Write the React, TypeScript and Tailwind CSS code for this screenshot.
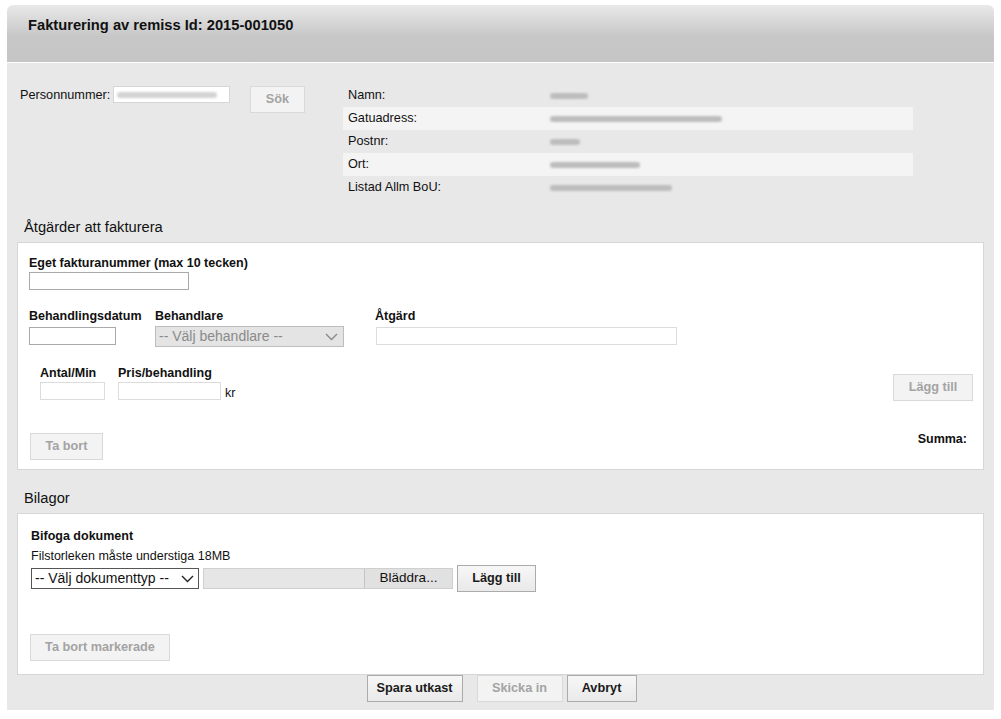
import React from 'react';

const font = { fontFamily: '"Liberation Sans", Arial, sans-serif' };

const Btn: React.FC<{ label: string; disabled?: boolean; className?: string }> = ({ label, disabled, className = '' }) => (
  <div
    className={`flex items-center justify-center border text-[12.7px] font-bold ${
      disabled
        ? 'border-[#d9d9d9] bg-[#f3f3f3] text-[#a3a3a3]'
        : 'border-[#ababab] bg-linear-to-b from-[#f7f7f7] to-[#e9e9e9] text-[#1a1a1a]'
    } ${className}`}
  >
    {label}
  </div>
);

const Chevron: React.FC<{ color: string }> = ({ color }) => (
  <svg width="13" height="8" viewBox="0 0 13 8" fill="none">
    <path d="M1 1l5.5 5.5L12 1" stroke={color} strokeWidth="1.4" />
  </svg>
);

const Blur: React.FC<{ w: number; light?: boolean }> = ({ w, light }) => (
  <div
    className={`h-[6px] rounded-sm blur-[1.2px] ${light ? 'bg-[#d4d4d4]' : 'bg-[#bdbdbd]'}`}
    style={{ width: w }}
  />
);

const info: { label: string; w: number; stripe: boolean }[] = [
  { label: 'Namn:', w: 38, stripe: false },
  { label: 'Gatuadress:', w: 172, stripe: true },
  { label: 'Postnr:', w: 30, stripe: false },
  { label: 'Ort:', w: 90, stripe: true },
  { label: 'Listad Allm BoU:', w: 122, stripe: false },
];

export default function App() {
  return (
    <div className="min-h-[719px] bg-white pt-[5px] pl-[7px]" style={font}>
      <div className="w-[987px]">
        <div className="h-[57px] rounded-t-[6px] bg-linear-to-b from-[#e9e9e9] via-[#c7c7c7] via-55% to-[#c5c5c5] pl-[21px] pt-[9px] text-[14.7px] font-bold text-[#111]">
          Fakturering av remiss Id: 2015-001050
        </div>
        <div className="h-px bg-white" />
        <div className="h-[647px] bg-[#e8e8e8]">
          {/* top section */}
          <div className="flex pt-[21px]">
            <div className="flex w-[336px] items-start pl-[13px]">
              <div className="mt-[2px] w-[93px] text-[12.7px] text-[#111]">Personnummer:</div>
              <div className="mt-[2px] flex h-[17px] w-[117px] items-center border border-[#d6d6d6] bg-white pl-[3px]">
                <Blur w={100} light />
              </div>
              <Btn label="Sök" disabled className="ml-[20px] mt-[2px] h-[27px] w-[55px]" />
            </div>
            <div className="w-[570px]">
              {info.map((r) => (
                <div
                  key={r.label}
                  className={`flex h-[23px] items-center text-[12.7px] text-[#111] ${r.stripe ? 'bg-[#f4f4f4]' : ''}`}
                >
                  <div className="w-[207px] pl-[5px]">{r.label}</div>
                  <Blur w={r.w} />
                </div>
              ))}
            </div>
          </div>

          {/* Åtgärder */}
          <div className="flex h-[43px] items-end pb-[5px] pl-[17px] text-[14.7px] leading-[20px] text-[#111]">
            Åtgärder att fakturera
          </div>
          <div className="mx-[10px] h-[228px] border border-[#d6d6d6] bg-white text-[12.5px] text-[#111]">
            <div className="pl-[11px] pt-[12px]">
              <div className="font-bold leading-[16px]">Eget fakturanummer (max 10 tecken)</div>
              <input className="mt-px block h-[18px] w-[160px] border border-[#a9a9a9] bg-white" />
            </div>
            <div className="mt-[18px] flex pl-[11px]">
              <div className="w-[126px]">
                <div className="font-bold leading-[16px]">Behandlingsdatum</div>
                <input className="mt-[3px] block h-[18px] w-[87px] border border-[#a9a9a9] bg-white" />
              </div>
              <div className="w-[220px]">
                <div className="font-bold leading-[16px]">Behandlare</div>
                <div className="mt-[2px] flex h-[21px] w-[189px] items-center justify-between border border-[#bdbdbd] bg-[#e4e4e4] pl-[3px] pr-[5px] text-[14px] text-[#8a8a8a]">
                  <span>-- Välj behandlare --</span>
                  <Chevron color="#8a8a8a" />
                </div>
              </div>
              <div>
                <div className="font-bold leading-[16px]">Åtgärd</div>
                <input className="ml-px mt-[3px] block h-[18px] w-[301px] border border-[#dcdcdc] bg-white" />
              </div>
            </div>
            <div className="mt-[18px] flex items-start pl-[22px] pr-[10px]">
              <div className="w-[78px]">
                <div className="font-bold leading-[16px]">Antal/Min</div>
                <input className="mt-[1px] block h-[18px] w-[65px] border border-[#dcdcdc] bg-white" />
              </div>
              <div>
                <div className="font-bold leading-[16px]">Pris/behandling</div>
                <div className="mt-[1px] flex items-end">
                  <input className="block h-[18px] w-[103px] border border-[#dcdcdc] bg-white" />
                  <span className="ml-[4px] leading-[14px]">kr</span>
                </div>
              </div>
              <Btn label="Lägg till" disabled className="ml-auto mt-[9px] h-[27px] w-[80px]" />
            </div>
            <div className="mt-[32px] flex items-start pl-[12px] pr-[16px]">
              <Btn label="Ta bort" disabled className="h-[27px] w-[73px]" />
              <div className="ml-auto mt-[-3px] font-bold">Summa:</div>
            </div>
          </div>

          {/* Bilagor */}
          <div className="flex h-[43px] items-end pb-[5px] pl-[17px] text-[14.7px] leading-[20px] text-[#111]">
            Bilagor
          </div>
          <div className="mx-[10px] h-[162px] border border-[#d6d6d6] bg-white text-[12.5px] text-[#111]">
            <div className="pl-[13px] pt-[14px]">
              <div className="font-bold leading-[16px]">Bifoga dokument</div>
              <div className="mt-[4px] leading-[16px]">Filstorleken måste understiga 18MB</div>
              <div className="mt-[1px] flex items-center">
                <div className="flex h-[21px] w-[168px] items-center justify-between border border-[#555] bg-white pl-[3px] pr-[4px] text-[14px] text-[#111]">
                  <span>-- Välj dokumenttyp --</span>
                  <Chevron color="#222" />
                </div>
                <div className="ml-[4px] flex h-[21px] w-[250px] border border-[#cfcfcf] bg-[#e6e6e6]">
                  <div className="w-[160px]" />
                  <div className="flex flex-1 items-center justify-center border-l border-[#c4c4c4] bg-[#e1e1e1] text-[13.5px]">
                    Bläddra...
                  </div>
                </div>
                <Btn label="Lägg till" className="ml-[4px] h-[27px] w-[79px]" />
              </div>
              <Btn label="Ta bort markerade" disabled className="ml-[-1px] mt-[42px] h-[27px] w-[140px]" />
            </div>
          </div>
          <div className="flex justify-center pl-[2px]">
            <Btn label="Spara utkast" className="h-[27px] w-[96px]" />
            <Btn label="Skicka in" disabled className="ml-[14px] h-[27px] w-[86px]" />
            <Btn label="Avbryt" className="ml-[4px] h-[27px] w-[70px]" />
          </div>
        </div>
      </div>
    </div>
  );
}
